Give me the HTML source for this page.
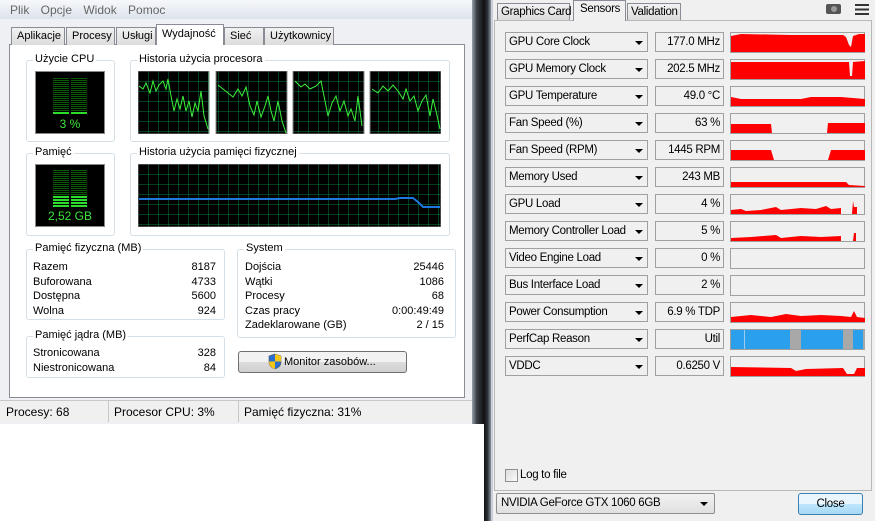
<!DOCTYPE html>
<html><head><meta charset="utf-8"><style>
*{box-sizing:border-box;margin:0;padding:0}
body{width:875px;height:521px;overflow:hidden;position:relative;background:#fff;font-family:"Liberation Sans",sans-serif;font-size:11px;color:#000}
.a{position:absolute}
.gb{position:absolute;border:1px solid #d5dfe5;border-radius:3px}
.gb>.t{position:absolute;top:-8px;left:6px;background:#fff;padding:0 2px;font-size:11px;color:#000}
.blk{position:absolute;background:#000;border:1px solid #888}
.tab{position:absolute;top:27px;height:18px;border:1px solid #898c95;border-bottom:none;background:linear-gradient(#f2f2f2,#dcdcdc);font-size:11px;padding:2px 5px;white-space:nowrap}
.nm{position:absolute;left:505px;width:143px;height:20px;border:1px solid #a0a0a0;background:#f0f0f0;padding:3px 3px;font-size:11.5px;letter-spacing:-.3px;white-space:nowrap}
.nm:after{content:"";position:absolute;right:4px;top:8px;border-left:4px solid transparent;border-right:4px solid transparent;border-top:4px solid #000}
.vl{position:absolute;left:655px;width:69px;height:20px;border:1px solid #a0a0a0;background:#f0f0f0;padding:3px 3px;font-size:11.5px;letter-spacing:-.3px;text-align:right;white-space:nowrap}
.gr{position:absolute;left:730px;width:135px;height:21px;border:1px solid #a0a0a0;background:#f0f0f0}
.gr svg{position:absolute;left:0;top:0}
.gt{letter-spacing:-.3px;font-size:11.5px}
</style></head><body>
<!-- Left window -->
<div class="a" style="left:0;top:0;width:472px;height:425px;background:#eef0f3"></div>
<div class="a" style="left:0;top:0;width:472px;height:19px;background:linear-gradient(#f6f8fb,#dde3ec);color:#666;font-size:12px;padding:3px 10px;word-spacing:8px">Plik Opcje Widok Pomoc</div>
<div class="a" style="left:9px;top:44px;width:456px;height:354px;background:#fff;border:1px solid #898c95"></div>
<div class="tab" style="left:11px;width:54px">Aplikacje</div>
<div class="tab" style="left:66px;width:49px">Procesy</div>
<div class="tab" style="left:116px;width:40px">Usługi</div>
<div class="tab" style="left:156px;top:24px;height:21px;width:68px;background:#fff;padding-top:3px">Wydajność</div>
<div class="tab" style="left:224px;width:40px">Sieć</div>
<div class="tab" style="left:264px;width:70px">Użytkownicy</div>

<div class="gb" style="left:26px;top:60px;width:89px;height:82px"><span class="t">Użycie CPU</span></div>
<div class="blk" style="left:35px;top:71px;width:70px;height:63px">
<div class="a" style="left:17px;top:6px;width:16px;height:34px;background:repeating-linear-gradient(#0a5a0a 0 1px,#000 1px 2px)"></div>
<div class="a" style="left:35px;top:6px;width:16px;height:34px;background:repeating-linear-gradient(#0a5a0a 0 1px,#000 1px 2px)"></div>
<div class="a" style="left:17px;top:40px;width:16px;height:2px;background:#2ddd2d"></div>
<div class="a" style="left:35px;top:40px;width:16px;height:2px;background:#2ddd2d"></div>
<div class="a" style="left:0;top:45px;width:68px;text-align:center;color:#3ee63e;font-size:12px">3 %</div>
</div>
<div class="gb" style="left:130px;top:60px;width:320px;height:82px"><span class="t">Historia użycia procesora</span></div>
<svg class="a" style="left:138px;top:71px" width="303" height="63">
<defs><pattern id="g" width="10" height="10" patternUnits="userSpaceOnUse"><rect width="10" height="10" fill="#000"/><path d="M0 0V10M0 0H10" stroke="#008040" stroke-width="1"/></pattern></defs>
<rect x="0" y="0" width="71" height="63" fill="url(#g)" stroke="#888"/>
<rect x="78" y="0" width="71" height="63" fill="url(#g)" stroke="#888"/>
<rect x="155" y="0" width="71" height="63" fill="url(#g)" stroke="#888"/>
<rect x="232" y="0" width="71" height="63" fill="url(#g)" stroke="#888"/>
<g fill="none" stroke="#3bf03b" stroke-width="1">
<polyline points="1,15 5,18 8,12 12,22 15,10 18,20 21,14 25,10 28,18 30,8 33,25 36,40 39,28 42,38 45,25 48,40 51,30 54,46 57,32 60,40 63,20 66,45 70,58"/>
<polyline points="80,14 85,18 90,22 95,26 100,18 104,25 108,16 112,35 116,44 119,30 123,46 127,35 130,25 133,40 136,50 140,30 144,50 148,62"/>
<polyline points="157,10 163,16 167,13 172,18 178,15 183,10 187,30 190,45 194,32 198,25 202,40 206,30 210,45 213,38 217,50 220,25 224,55"/>
<polyline points="234,18 240,22 245,15 250,20 255,14 260,20 265,28 268,18 272,30 276,25 280,40 284,30 288,24 292,45 295,28 298,40 302,58"/>
</g></svg>

<div class="gb" style="left:26px;top:153px;width:89px;height:83px"><span class="t">Pamięć</span></div>
<div class="blk" style="left:35px;top:164px;width:70px;height:63px">
<div class="a" style="left:17px;top:5px;width:16px;height:26px;background:repeating-linear-gradient(#0a5a0a 0 1px,#000 1px 2px)"></div>
<div class="a" style="left:35px;top:5px;width:16px;height:26px;background:repeating-linear-gradient(#0a5a0a 0 1px,#000 1px 2px)"></div>
<div class="a" style="left:17px;top:31px;width:16px;height:11px;background:repeating-linear-gradient(#2ddd2d 0 2px,#000 2px 3px)"></div>
<div class="a" style="left:35px;top:31px;width:16px;height:11px;background:repeating-linear-gradient(#2ddd2d 0 2px,#000 2px 3px)"></div>
<div class="a" style="left:0;top:44px;width:68px;text-align:center;color:#3ee63e;font-size:12px">2,52 GB</div>
</div>
<div class="gb" style="left:130px;top:153px;width:320px;height:83px"><span class="t">Historia użycia pamięci fizycznej</span></div>
<svg class="a" style="left:138px;top:164px" width="303" height="63">
<rect x="0" y="0" width="303" height="63" fill="url(#g)" stroke="#888"/>
<polyline points="1,35 257,35 262,34 275,34 280,38 285,43 302,43" fill="none" stroke="#1e78dc" stroke-width="2"/>
</svg>

<div class="gb" style="left:26px;top:249px;width:199px;height:71px"><span class="t">Pamięć fizyczna (MB)</span>
<div class="a" style="left:6px;top:10px;line-height:14.6px">Razem<br>Buforowana<br>Dostępna<br>Wolna</div>
<div class="a" style="right:8px;top:10px;line-height:14.6px;text-align:right">8187<br>4733<br>5600<br>924</div></div>
<div class="gb" style="left:26px;top:336px;width:199px;height:42px"><span class="t">Pamięć jądra (MB)</span>
<div class="a" style="left:6px;top:9px;line-height:15px">Stronicowana<br>Niestronicowana</div>
<div class="a" style="right:8px;top:9px;line-height:15px;text-align:right">328<br>84</div></div>
<div class="gb" style="left:237px;top:249px;width:219px;height:89px"><span class="t">System</span>
<div class="a" style="left:7px;top:10px;line-height:14.6px">Dojścia<br>Wątki<br>Procesy<br>Czas pracy<br>Zadeklarowane (GB)</div>
<div class="a" style="right:11px;top:10px;line-height:14.6px;text-align:right">25446<br>1086<br>68<br>0:00:49:49<br>2 / 15</div></div>
<div class="a" style="left:238px;top:351px;width:169px;height:22px;border:1px solid #707070;border-radius:3px;background:linear-gradient(#f2f2f2 50%,#dddddd 50%,#cfcfcf);padding:4px 0 0 45px">Monitor zasobów...</div>
<svg class="a" style="left:268px;top:353px" width="14" height="17"><path d="M7 1L13 3V9Q13 14 7 16Q1 14 1 9V3Z" fill="#2a6fd0" stroke="#555" stroke-width=".6"/><path d="M7 1V8.5H13V3ZM1 8.5H7V16Q1 14 1 9Z" fill="#f5c518"/></svg>

<div class="a" style="left:0;top:400px;width:472px;height:22px;background:#f0f0f0;border-top:1px solid #c8c8c8;font-size:12px">
<div class="a" style="left:6px;top:4px">Procesy: 68</div>
<div class="a" style="left:108px;top:0;height:21px;border-left:1px solid #c8c8c8"></div>
<div class="a" style="left:114px;top:4px">Procesor CPU: 3%</div>
<div class="a" style="left:238px;top:0;height:21px;border-left:1px solid #c8c8c8"></div>
<div class="a" style="left:244px;top:4px">Pamięć fizyczna: 31%</div></div>
<div class="a" style="left:472px;top:0;width:12px;height:521px;background:linear-gradient(90deg,#9aa0a8,#3a3f46 40%,#111)"></div>
<div class="a" style="left:0;top:424px;width:484px;height:97px;background:#fff"></div>
<div class="a" style="left:484px;top:0;width:7px;height:521px;background:linear-gradient(90deg,#111,#2a2f36,#8a939e)"></div>

<!-- GPU-Z -->
<div class="a" style="left:491px;top:0;width:384px;height:521px;background:#f0f0f0;border-left:2px solid #c8ced6"></div>
<div class="a" style="left:494px;top:20px;width:378px;height:471px;border:1px solid #b8b8b8"></div>
<div class="tab gt" style="left:497px;top:3px;width:73px;height:17px;padding:2px 3px">Graphics Card</div>
<div class="tab gt" style="left:573px;top:0;width:53px;height:21px;background:#f0f0f0;padding:2px 6px">Sensors</div>
<div class="tab gt" style="left:627px;top:3px;width:54px;height:17px;padding:2px 3px">Validation</div>
<div class="a" style="left:826px;top:4px;width:15px;height:10px;background:#555;border-radius:2px"><div class="a" style="left:5px;top:2px;width:6px;height:6px;border-radius:50%;background:#999"></div></div>
<div class="a" style="left:855px;top:4px;width:14px;height:11px;background:repeating-linear-gradient(#333 0 2px,transparent 2px 4.5px)"></div>

<div class="nm" style="top:32px">GPU Core Clock</div><div class="vl" style="top:32px">177.0 MHz</div>
<div class="gr" style="top:32px"><svg width="134" height="19"><polygon fill="#f00" points="0,19 0,3 10,1 60,2 112,2 115,4 118,12 120,14 122,3 128,1 134,1 134,19"/></svg></div>
<div class="nm" style="top:59px">GPU Memory Clock</div><div class="vl" style="top:59px">202.5 MHz</div>
<div class="gr" style="top:59px"><svg width="134" height="19"><polygon fill="#f00" points="0,19 0,2 118,2 119,16 121,16 122,2 134,1 134,19"/></svg></div>
<div class="nm" style="top:86px">GPU Temperature</div><div class="vl" style="top:86px">49.0 °C</div>
<div class="gr" style="top:86px"><svg width="134" height="19"><polygon fill="#f00" points="0,19 0,10 10,12 70,12 80,10 110,10 134,12 134,19"/></svg></div>
<div class="nm" style="top:113px">Fan Speed (%)</div><div class="vl" style="top:113px">63 %</div>
<div class="gr" style="top:113px"><svg width="134" height="19"><polygon fill="#f00" points="0,19 0,10 40,10 41,19"/><polygon fill="#f00" points="96,19 97,9 134,9 134,19"/></svg></div>
<div class="nm" style="top:140px">Fan Speed (RPM)</div><div class="vl" style="top:140px">1445 RPM</div>
<div class="gr" style="top:140px"><svg width="134" height="19"><polygon fill="#f00" points="0,19 0,9 40,9 43,19"/><polygon fill="#f00" points="97,19 100,9 134,9 134,19"/></svg></div>
<div class="nm" style="top:167px">Memory Used</div><div class="vl" style="top:167px">243 MB</div>
<div class="gr" style="top:167px"><svg width="134" height="19"><polygon fill="#f00" points="0,19 0,14 115,14 118,17 134,18 134,19"/></svg></div>
<div class="nm" style="top:194px">GPU Load</div><div class="vl" style="top:194px">4 %</div>
<div class="gr" style="top:194px"><svg width="134" height="19"><polygon fill="#f00" points="0,19 0,15 10,14 15,16 30,15 45,12 50,15 70,13 85,14 95,11 100,14 110,13 110,19"/><polygon fill="#f00" points="121,19 122,6 123,12 126,12 126,19"/></svg></div>
<div class="nm" style="top:221px">Memory Controller Load</div><div class="vl" style="top:221px">5 %</div>
<div class="gr" style="top:221px"><svg width="134" height="19"><polygon fill="#f00" points="0,19 0,16 20,15 45,13 50,16 70,14 90,15 110,14 110,19"/><polygon fill="#f00" points="122,19 123,11 125,11 125,19"/></svg></div>
<div class="nm" style="top:248px">Video Engine Load</div><div class="vl" style="top:248px">0 %</div><div class="gr" style="top:248px"></div>
<div class="nm" style="top:275px">Bus Interface Load</div><div class="vl" style="top:275px">2 %</div><div class="gr" style="top:275px"></div>
<div class="nm" style="top:302px">Power Consumption</div><div class="vl" style="top:302px">6.9 % TDP</div>
<div class="gr" style="top:302px"><svg width="134" height="19"><polygon fill="#f00" points="0,19 0,14 20,12 40,14 55,11 70,13 90,12 110,13 120,14 123,8 126,14 134,15 134,19"/></svg></div>
<div class="nm" style="top:329px">PerfCap Reason</div><div class="vl" style="top:329px">Util</div>
<div class="gr" style="top:329px"><svg width="134" height="19"><rect width="134" height="19" fill="#2a9fec"/><rect x="13" width="1" height="19" fill="#9ccbf0"/><rect x="59" width="11" height="19" fill="#a8a8a8"/><rect x="112" width="10" height="19" fill="#a8a8a8"/><rect x="132" width="2" height="19" fill="#a8a8a8"/></svg></div>
<div class="nm" style="top:356px">VDDC</div><div class="vl" style="top:356px">0.6250 V</div>
<div class="gr" style="top:356px"><svg width="134" height="19"><polygon fill="#f00" points="0,19 0,10 60,11 65,14 75,12 112,11 116,17 123,17 126,11 134,11 134,19"/></svg></div>

<div class="a" style="left:505px;top:469px;width:13px;height:13px;border:1px solid #8e8f8f;background:linear-gradient(135deg,#dcdcdc,#fafafa)"></div>
<div class="a gt" style="left:520px;top:469px">Log to file</div>
<div class="a gt" style="left:496px;top:493px;width:219px;height:21px;border:1px solid #8e8f8f;border-radius:2px;background:linear-gradient(#f2f2f2,#e0e0e0);padding:3px 4px">NVIDIA GeForce GTX 1060 6GB</div>
<div class="a" style="left:700px;top:502px;border-left:4px solid transparent;border-right:4px solid transparent;border-top:4px solid #000"></div>
<div class="a gt" style="left:798px;top:493px;width:65px;height:22px;border:1px solid #3c7fb1;border-radius:3px;background:linear-gradient(#eaf6fd 50%,#bee6fd 50%,#a7d9f5);text-align:center;padding-top:4px">Close</div>
</body></html>
